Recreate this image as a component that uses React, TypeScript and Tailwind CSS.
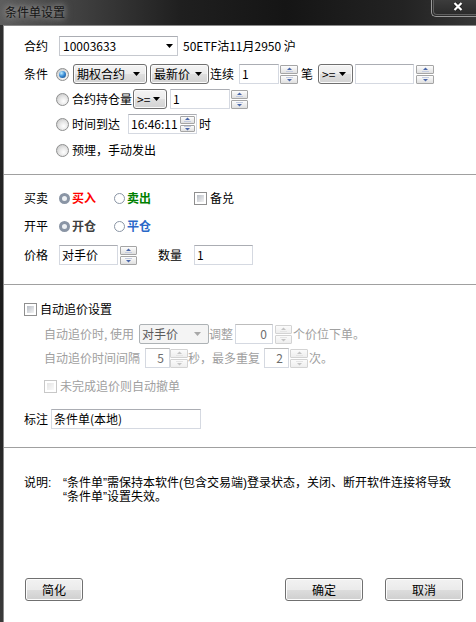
import React from "react";

const Arrow = ({ color = "#000" }: { color?: string }) => (
  <svg width="7" height="4" viewBox="0 0 7 4" className="shrink-0">
    <path d="M0 0H7L3.5 4Z" fill={color} />
  </svg>
);

function Spin({ cls, disabled = false }: { cls: string; disabled?: boolean }) {
  const c = disabled ? "#c4c4c4" : "#4a66a8";
  const l = disabled ? "#e4e4e4" : "#c3cbe0";
  const box = disabled
    ? "border-[#d3d3d3] from-[#fbfbfb] to-[#eeeeee]"
    : "border-[#a5a5a5] from-[#fdfdfd] to-[#e0e0e0]";
  return (
    <div className={`flex flex-col gap-[1px] shrink-0 ${cls}`}>
      <div className={`flex-1 border rounded-[1px] bg-linear-to-b flex items-center justify-center ${box}`}>
        <svg width="9" height="5" viewBox="0 0 9 5">
          <path d="M4.5 0.5L7 3H2Z" fill={c} />
          <path d="M1 4.5H8" stroke={l} strokeWidth="1" />
        </svg>
      </div>
      <div className={`flex-1 border rounded-[1px] bg-linear-to-b flex items-center justify-center ${box}`}>
        <svg width="9" height="5" viewBox="0 0 9 5">
          <path d="M1 0.5H8" stroke={l} strokeWidth="1" />
          <path d="M2 2H7L4.5 4.5Z" fill={c} />
        </svg>
      </div>
    </div>
  );
}

function Input({
  cls,
  value = "",
  right = false,
  disabled = false,
}: {
  cls: string;
  value?: string;
  right?: boolean;
  disabled?: boolean;
}) {
  return (
    <div
      className={`h-[20px] shrink-0 border border-[#d5d9e1] border-t-[#abadb3] bg-white flex items-center ${
        right ? "justify-end pr-[5px]" : "pl-[2px]"
      } ${disabled ? "text-[#6d6d6d]" : "text-black"} ${cls}`}
    >
      <span className="whitespace-nowrap">{value}</span>
    </div>
  );
}

function Drop({ cls, label }: { cls: string; label: string }) {
  return (
    <div
      className={`h-[20px] shrink-0 rounded-[3px] border border-[#707070] bg-[linear-gradient(#f4f4f4_0%,#ececec_50%,#dfdfdf_51%,#d2d2d2_100%)] shadow-[inset_0_0_0_1px_#fbfbfb] flex items-center justify-between pl-[3px] pr-[6px] ${cls}`}
    >
      <span className="whitespace-nowrap">{label}</span>
      <Arrow />
    </div>
  );
}

function Radio({ checked = false }: { checked?: boolean }) {
  return (
    <div className="w-[13px] h-[13px] shrink-0 rounded-full border border-[#8e8f8f] bg-[radial-gradient(circle_at_60%_65%,#ffffff_0%,#e6e6e6_45%,#bdbdbd_100%)] flex items-center justify-center">
      {checked && (
        <div className="w-[7px] h-[7px] rounded-full bg-[radial-gradient(circle_at_35%_30%,#c4f0ff_0%,#3c8fd8_45%,#0f3d78_100%)]" />
      )}
    </div>
  );
}

function SRadio({ checked = false }: { checked?: boolean }) {
  return (
    <div
      className={`w-[11px] h-[11px] shrink-0 rounded-full ${
        checked ? "border-[3px] border-[#8a95a5] bg-[#eef1f4]" : "border border-[#8a95a5] bg-white"
      }`}
    />
  );
}

function Check({ disabled = false }: { disabled?: boolean }) {
  return (
    <div
      className={`w-[13px] h-[13px] shrink-0 border p-[2px] bg-white ${
        disabled ? "border-[#c8c8c8]" : "border-[#8f8f8f]"
      }`}
    >
      <div
        className={`w-full h-full bg-linear-to-br ${
          disabled ? "from-[#e4e4e4] to-[#fafafa]" : "from-[#b9bec6] to-[#f4f4f4]"
        }`}
      />
    </div>
  );
}

function Btn({ cls, label }: { cls: string; label: string }) {
  return (
    <div
      className={`h-[23px] shrink-0 rounded-[3px] border border-[#707070] bg-[linear-gradient(#f2f2f2_0%,#ebebeb_50%,#dddddd_51%,#cfcfcf_100%)] shadow-[inset_0_0_0_1px_#fcfcfc] flex items-center justify-center ${cls}`}
    >
      {label}
    </div>
  );
}

export default function App() {
  return (
    <div className="w-[476px] h-[622px] overflow-hidden flex flex-col bg-[#1c1c1c] font-['Noto_Sans_CJK_SC',sans-serif] text-[12px] text-black">
      {/* title bar */}
      <div className="h-[25px] shrink-0 flex items-start bg-[linear-gradient(to_right,#5e5e5e_0%,#474747_12%,#1f1f1f_38%,#151515_60%,#232323_85%,#363636_100%)]">
        <div className="pl-[5px] pt-[4px] leading-[16px] text-[12px] text-[#141414] [text-shadow:0_0_6px_rgba(230,230,230,0.6),0_0_10px_rgba(200,200,200,0.5)]">
          条件单设置
        </div>
        <div className="ml-auto w-[45px] h-[17px] shrink-0 rounded-bl-[5px] border-l border-b border-[#9a9a9a] pl-[1px] pb-[1px]">
          <div className="w-full h-full rounded-bl-[4px] border-l border-b border-[#5f5f5f] bg-linear-to-b from-[#3c3c3c] to-[#2b2b2b] flex items-center justify-center pl-[6px] pb-[2px]">
            <svg width="10" height="9" viewBox="0 0 10 9">
              <path d="M1.5 1L8.5 8M8.5 1L1.5 8" stroke="#1a1a1a" strokeWidth="3.6" />
              <path d="M1.5 1L8.5 8M8.5 1L1.5 8" stroke="#ffffff" strokeWidth="2.2" />
            </svg>
          </div>
        </div>
      </div>

      <div className="flex-1 flex min-h-0">
        <div className="w-[3px] shrink-0 bg-linear-to-b from-[#2e2e2e] via-[#1b1b1b] to-[#3a3a3a]" />
        <div className="flex-1 bg-white border-l border-t border-[#8a8a8a] flex flex-col">
          {/* Section 1 */}
          <div className="mt-[10px] h-[20px] flex items-center pl-[20px]">
            <span className="w-[35px] shrink-0">合约</span>
            <div className="w-[119px] h-[20px] shrink-0 border border-[#c6c9cf] border-t-[#abadb3] bg-white flex items-center justify-between pl-[3px] pr-[4px]">
              <span>10003633</span>
              <Arrow />
            </div>
            <span className="ml-[5px] whitespace-nowrap">50ETF沽11月2950 沪</span>
          </div>

          <div className="mt-[8px] h-[20px] flex items-center pl-[20px]">
            <span className="w-[32px] shrink-0">条件</span>
            <Radio checked />
            <Drop cls="w-[74px] ml-[4px]" label="期权合约" />
            <Drop cls="w-[59px] ml-[3px]" label="最新价" />
            <span className="w-[30px] shrink-0 pl-[1px]">连续</span>
            <Input cls="w-[40px]" value="1" />
            <Spin cls="w-[18px] h-[19px] ml-[1px]" />
            <span className="w-[20px] shrink-0 pl-[3px]">笔</span>
            <Drop cls="w-[35px]" label=">=" />
            <Input cls="w-[59px] ml-[2px]" />
            <Spin cls="w-[18px] h-[19px] ml-[2px]" />
          </div>

          <div className="mt-[5px] h-[20px] flex items-center pl-[52px]">
            <Radio />
            <span className="w-[64px] shrink-0 pl-[3px] whitespace-nowrap">合约持仓量</span>
            <Drop cls="w-[34px]" label=">=" />
            <Input cls="w-[60px] ml-[3px]" value="1" />
            <Spin cls="w-[17px] h-[19px] ml-[1px]" />
          </div>

          <div className="mt-[5px] h-[20px] flex items-center pl-[52px]">
            <Radio />
            <span className="w-[59px] shrink-0 pl-[3px]">时间到达</span>
            <div className="w-[69px] h-[20px] shrink-0 border border-[#d5d9e1] border-t-[#abadb3] bg-white flex items-center justify-between pl-[2px] pr-[1px]">
              <span>16:46:11</span>
              <Spin cls="w-[15px] h-[16px]" />
            </div>
            <span className="ml-[2px]">时</span>
          </div>

          <div className="mt-[6px] h-[20px] flex items-center pl-[52px]">
            <Radio />
            <span className="pl-[3px]">预埋，手动发出</span>
          </div>

          <div className="mt-[14px] h-px shrink-0 bg-[#a0a0a0]" />

          {/* Section 2 */}
          <div className="mt-[13px] h-[20px] flex items-center pl-[20px]">
            <span className="w-[35px] shrink-0">买卖</span>
            <div className="w-[55px] shrink-0 flex items-center">
              <SRadio checked />
              <span className="ml-[2px] font-bold text-[#ff0000]">买入</span>
            </div>
            <div className="w-[80px] shrink-0 flex items-center">
              <SRadio />
              <span className="ml-[2px] font-bold text-[#008000]">卖出</span>
            </div>
            <Check />
            <span className="ml-[3px]">备兑</span>
          </div>

          <div className="mt-[8px] h-[20px] flex items-center pl-[20px]">
            <span className="w-[35px] shrink-0">开平</span>
            <div className="w-[55px] shrink-0 flex items-center">
              <SRadio checked />
              <span className="ml-[2px] font-bold text-[#404040]">开仓</span>
            </div>
            <div className="w-[80px] shrink-0 flex items-center">
              <SRadio />
              <span className="ml-[2px] font-bold text-[#2a68c8]">平仓</span>
            </div>
          </div>

          <div className="mt-[9px] h-[20px] flex items-center pl-[20px]">
            <span className="w-[35px] shrink-0">价格</span>
            <Input cls="w-[59px]" value="对手价" />
            <Spin cls="w-[17px] h-[19px] ml-[2px]" />
            <span className="w-[57px] shrink-0 pl-[21px]">数量</span>
            <Input cls="w-[59px]" value="1" />
          </div>

          <div className="mt-[19px] h-px shrink-0 bg-[#a0a0a0]" />

          {/* Section 3 */}
          <div className="mt-[14px] h-[20px] flex items-center pl-[20px]">
            <Check />
            <span className="ml-[3px]">自动追价设置</span>
          </div>

          <div className="mt-[5px] h-[20px] flex items-center pl-[40px] text-[#a0a0a0]">
            <span className="w-[95px] shrink-0 whitespace-nowrap">自动追价时, 使用</span>
            <div className="w-[70px] h-[20px] shrink-0 rounded-[2px] border border-[#adb2b5] bg-[#f4f4f4] flex items-center justify-between pl-[2px] pr-[7px] text-[#5a5a5a]">
              <span>对手价</span>
              <Arrow color="#a8a8a8" />
            </div>
            <span className="w-[26px] shrink-0">调整</span>
            <Input cls="w-[38px] border-[#cfcfcf] border-t-[#bdbdbd]" value="0" right disabled />
            <Spin cls="w-[17px] h-[19px] ml-[2px]" disabled />
            <span className="ml-[1px] whitespace-nowrap">个价位下单。</span>
          </div>

          <div className="mt-[4px] h-[20px] flex items-center pl-[40px] text-[#a0a0a0]">
            <span className="w-[101px] shrink-0 whitespace-nowrap">自动追价时间间隔</span>
            <Input cls="w-[25px] border-[#cfcfcf] border-t-[#bdbdbd]" value="5" right disabled />
            <Spin cls="w-[18px] h-[19px]" disabled />
            <span className="w-[76px] shrink-0 whitespace-nowrap">秒，最多重复</span>
            <Input cls="w-[25px] border-[#cfcfcf] border-t-[#bdbdbd]" value="2" right disabled />
            <Spin cls="w-[18px] h-[19px] ml-[1px]" disabled />
            <span className="ml-[1px] whitespace-nowrap">次。</span>
          </div>

          <div className="mt-[8px] h-[20px] flex items-center pl-[40px] text-[#a0a0a0]">
            <Check disabled />
            <span className="ml-[3px]">未完成追价则自动撤单</span>
          </div>

          <div className="mt-[13px] h-[20px] flex items-center pl-[20px]">
            <span className="w-[27px] shrink-0">标注</span>
            <Input cls="w-[150px]" value="条件单(本地)" />
          </div>

          <div className="mt-[18px] h-px shrink-0 bg-[#a0a0a0]" />

          {/* Section 4 */}
          <div className="mt-[28px] flex pl-[20px] leading-[14px] font-['Liberation_Sans','Noto_Sans_CJK_SC',sans-serif]">
            <span className="w-[39px] shrink-0">说明:</span>
            <div className="whitespace-nowrap">
              <div>“条件单”需保持本软件(包含交易端)登录状态，关闭、断开软件连接将导致</div>
              <div>“条件单”设置失效。</div>
            </div>
          </div>

          <div className="mt-[74px] flex items-center pl-[21px] pr-[13px]">
            <Btn cls="w-[58px]" label="简化" />
            <Btn cls="w-[78px] ml-auto" label="确定" />
            <Btn cls="w-[78px] ml-[22px]" label="取消" />
          </div>
        </div>
      </div>
    </div>
  );
}
